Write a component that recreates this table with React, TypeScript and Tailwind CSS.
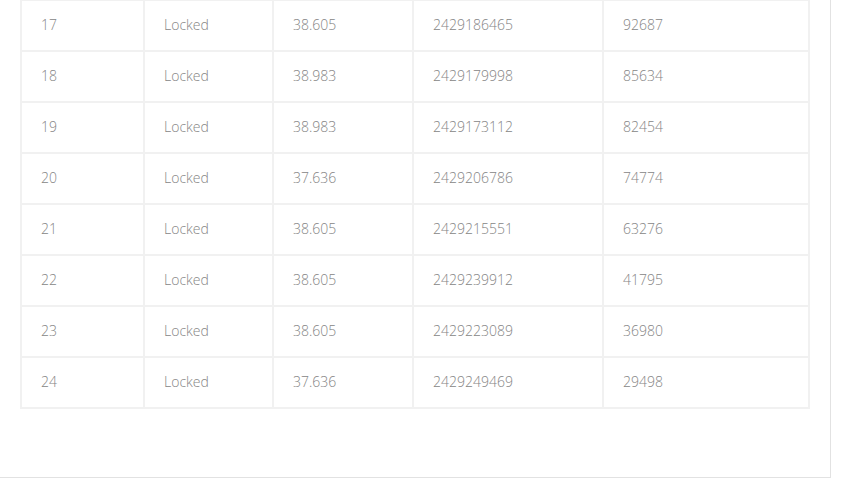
import React from 'react';

const rows = [
  ['17', 'Locked', '38.605', '2429186465', '92687'],
  ['18', 'Locked', '38.983', '2429179998', '85634'],
  ['19', 'Locked', '38.983', '2429173112', '82454'],
  ['20', 'Locked', '37.636', '2429206786', '74774'],
  ['21', 'Locked', '38.605', '2429215551', '63276'],
  ['22', 'Locked', '38.605', '2429239912', '41795'],
  ['23', 'Locked', '38.605', '2429223089', '36980'],
  ['24', 'Locked', '37.636', '2429249469', '29498'],
];

const widths = ['w-[123px]', 'w-[129px]', 'w-[140px]', 'w-[190px]', 'w-[206px]'];

export default function App() {
  return (
    <div className="w-[857px] h-[492px] bg-white overflow-hidden" style={{ fontFamily: '"Open Sans", sans-serif' }}>
      <div className="w-[831px] -mt-px border-r border-b border-[#e2e2e2] pl-5 pr-5 pb-[68px]">
        <table className="border-collapse table-fixed w-[790px]">
          <tbody>
            {rows.map((r) => (
              <tr key={r[0]}>
                {r.map((c, i) => (
                  <td
                    key={i}
                    className={`${widths[i]} h-[51px] border-2 border-[#f1f1f1] pl-[19px] pb-[3px] text-[14px] font-light text-[#858585] align-middle`}
                  >
                    {c}
                  </td>
                ))}
              </tr>
            ))}
          </tbody>
        </table>
      </div>
    </div>
  );
}
